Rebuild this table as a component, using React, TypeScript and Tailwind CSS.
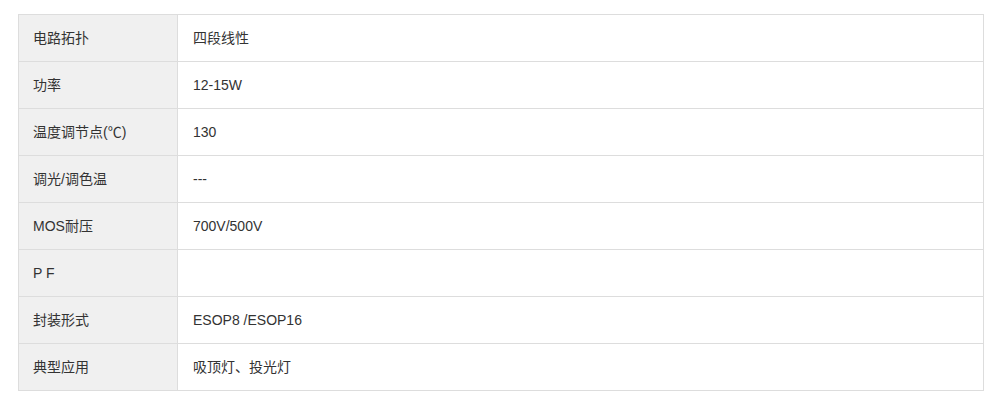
const rows = [
  { label: "电路拓扑", value: "四段线性" },
  { label: "功率", value: "12-15W" },
  { label: "温度调节点(℃)", value: "130" },
  { label: "调光/调色温", value: "---" },
  { label: "MOS耐压", value: "700V/500V" },
  { label: "P F", value: "" },
  { label: "封装形式", value: "ESOP8 /ESOP16" },
  { label: "典型应用", value: "吸顶灯、投光灯" },
];

export default function App() {
  return (
    <div className="w-[996px] h-[402px] bg-white pt-[14px] pl-[18px] font-['Liberation_Sans','Noto_Sans_CJK_SC',sans-serif]">
      <table className="w-[966px] border-collapse border border-[#dddddd] text-[14px] text-[#333333]">
        <tbody>
          {rows.map((row) => (
            <tr key={row.label} className="h-[47px]">
              <td className="w-[159px] border border-[#dddddd] bg-[#f0f0f0] px-[14px] align-middle">
                {row.label}
              </td>
              <td className="border border-[#dddddd] px-[15px] align-middle">
                {row.value}
              </td>
            </tr>
          ))}
        </tbody>
      </table>
    </div>
  );
}
